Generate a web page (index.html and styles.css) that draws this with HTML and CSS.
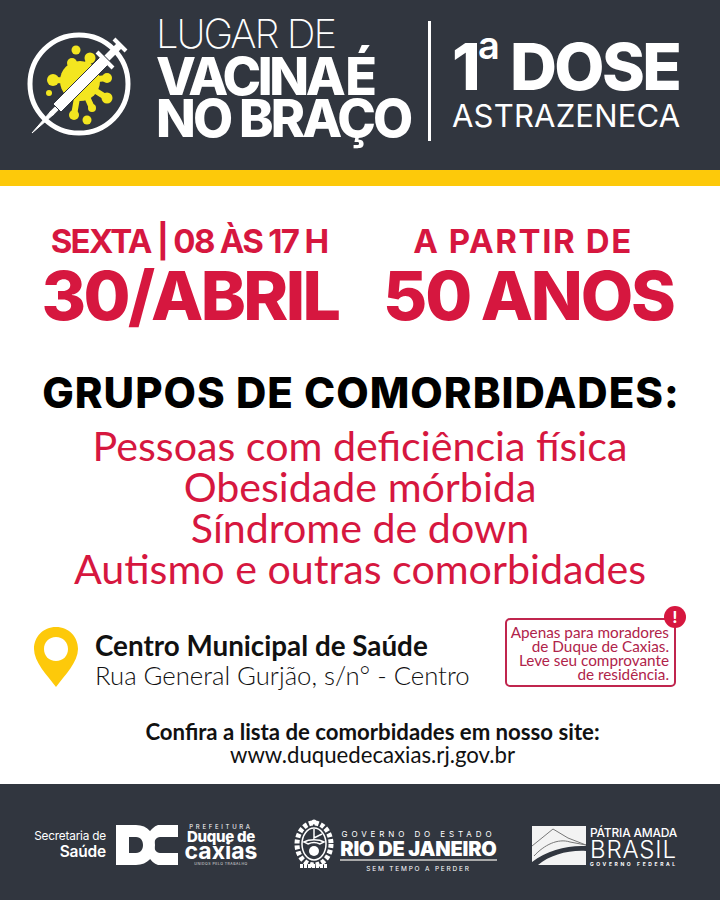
FILE: index.html
```html
<!DOCTYPE html>
<html lang="pt-BR">

<head>
    <meta charset="UTF-8">
    <title>Lugar de vacina é no braço</title>
    <link rel="stylesheet" href="styles.css">
</head>

<body>
    <header class="top">
        <svg class="vac-logo" width="106" height="106" viewBox="0 0 106 106">
            <circle cx="52" cy="57" r="49" fill="none" stroke="#fff" stroke-width="5" />
            <!-- virus -->
            <g fill="#f3e620">
                <circle cx="53" cy="54" r="20" />
                <circle cx="49" cy="23" r="4.5" />
                <circle cx="22" cy="66" r="3" />
                <circle cx="60" cy="93" r="4.5" />
                <circle cx="45" cy="36" r="5" />
                <circle cx="63" cy="31" r="5.5" />
                <circle cx="26" cy="53" r="6" />
                <circle cx="80" cy="51" r="5" />
                <circle cx="80" cy="71" r="5.5" />
                <circle cx="47" cy="88" r="5" />
                <circle cx="65" cy="81" r="4" />
                <path d="M45 36 53 54M63 31 53 54M26 53 53 54M80 51 53 54M80 71 53 54M47 88 53 54M65 81 53 54" stroke="#f3e620" stroke-width="6" />
            </g>
            <!-- seringa -->
            <path d="M5 106 24 84 27 87Z" fill="#fff" stroke="#fff" stroke-width="1" />
            <path d="M24 87 30 81" stroke="#fff" stroke-width="5" />
            <path d="M26 77 74 29 82 37 34 85Z" fill="#fff" stroke="#31363f" stroke-width="1" />
            <path d="M70 25 86 41" stroke="#fff" stroke-width="4" />
            <path d="M80 31 94 17" stroke="#fff" stroke-width="7" />
            <path d="M87 12 99 24" stroke="#fff" stroke-width="4" />
        </svg>
        <div class="slogan">
            <div class="slogan-thin">LUGAR DE</div>
            <div class="slogan-bold slogan-first">VACINA É</div>
            <div class="slogan-bold">NO BRAÇO</div>
        </div>
        <div class="top-divider"></div>
        <div class="dose">
            <div class="dose-num">1<sup>a</sup> DOSE</div>
            <div class="dose-name">ASTRAZENECA</div>
        </div>
    </header>
    <div class="stripe"></div>

    <main class="content">
        <div class="when">
            <div class="when-col">
                <div class="when-small">SEXTA | 08 ÀS 17 H</div>
                <div class="when-big">30/ABRIL</div>
            </div>
            <div class="when-col">
                <div class="when-small when-wide">A PARTIR DE</div>
                <div class="when-big">50 ANOS</div>
            </div>
        </div>

        <h1 class="groups-title">GRUPOS DE COMORBIDADES:</h1>
        <ul class="groups">
            <li>Pessoas com deficiência física</li>
            <li>Obesidade mórbida</li>
            <li>Síndrome de down</li>
            <li>Autismo e outras comorbidades</li>
        </ul>

        <div class="place-row">
            <svg class="pin" width="46" height="60" viewBox="0 0 46 60">
                <path d="M23 0C10 0 1 10 1 22c0 13 13 26 22 38 9-12 22-25 22-38C45 10 36 0 23 0Zm0 34c-7 0-12-5-12-12s5-12 12-12 12 5 12 12-5 12-12 12Z" fill="#fdc90a" fill-rule="evenodd" />
            </svg>
            <div class="place">
                <div class="place-name">Centro Municipal de Saúde</div>
                <div class="place-addr">Rua General Gurjão, s/n° - Centro</div>
            </div>
            <div class="notice">
                <span class="notice-mark">!</span>
                Apenas para moradores<br>
                de Duque de Caxias.<br>
                Leve seu comprovante<br>
                de residência.
            </div>
        </div>

        <div class="site">
            <div class="site-label">Confira a lista de comorbidades em nosso site:</div>
            <div>www.duquedecaxias.rj.gov.br</div>
        </div>
    </main>

    <footer class="bottom">
        <div class="sec">Secretaria de<br><b>Saúde</b></div>
        <svg class="dc-mark" width="62" height="40" viewBox="0 0 62 40">
            <path d="M0 0H20C32 0 39 9 39 20S32 40 20 40H0V0ZM13 12V28H20C25 28 27 24 27 20S25 12 20 12Z" fill="#fff" fill-rule="evenodd" />
            <path d="M62 0H42C34 3 30 11 30 20S34 37 42 40H62V28H44C40 28 38 24 38 20S40 12 44 12H62Z" fill="#fff" />
        </svg>
        <div class="dc-text">
            <div class="dc-pref">PREFEITURA</div>
            <div class="dc-duque">Duque de</div>
            <div class="dc-caxias">caxias</div>
            <div class="dc-unidos">UNIDOS PELO TRABALHO</div>
        </div>
        <svg class="rj-crest" width="42" height="52" viewBox="0 0 42 52">
            <ellipse cx="21" cy="25" rx="17" ry="21" fill="none" stroke="#fff" stroke-width="5" stroke-dasharray="4 2" />
            <ellipse cx="21" cy="25" rx="12" ry="16" fill="none" stroke="#fff" stroke-width="1.5" />
            <path d="M21 10V19L29 15M11 23C16 20 26 20 31 23L27 25C23 23 19 23 15 25Z" fill="none" stroke="#fff" stroke-width="1.5" />
            <circle cx="21" cy="32" r="5" fill="#fff" />
            <circle cx="21" cy="3" r="2.5" fill="#fff" />
            <path d="M7 47H35" stroke="#fff" stroke-width="4" stroke-dasharray="3 1" />
        </svg>
        <div class="rj-text">
            <div class="rj-gov">GOVERNO DO ESTADO</div>
            <div class="rj-name">RIO DE JANEIRO</div>
            <div class="rj-tag">SEM TEMPO A PERDER</div>
        </div>
        <svg class="br-mark" width="54" height="39" viewBox="0 0 54 39">
            <rect width="54" height="39" fill="#f3f3f3" />
            <path d="M0 36C15 24 36 19 54 20V25C36 24 18 29 6 39H0Z" fill="#31363f" />
            <path d="M0 20 21 3 36 12 54 19M2 30C12 19 26 12 38 16L54 19" fill="none" stroke="#777" stroke-width="1" />
        </svg>
        <div class="br-text">
            <div class="br-patria">PÁTRIA AMADA</div>
            <div class="br-name">BRASIL</div>
            <div class="br-gov">GOVERNO FEDERAL</div>
        </div>
    </footer>
</body>

</html>
```

FILE: styles.css
```css
* {
    box-sizing: border-box;
}

body {
    margin: 0;
    width: 720px;
    height: 900px;
    display: flex;
    flex-direction: column;
    background-color: #fff;
    font-family: 'Lato', 'Noto Sans', sans-serif;
    overflow: hidden;
}

/* topo */
.top {
    height: 170px;
    flex: none;
    display: flex;
    align-items: flex-start;
    background-color: #31363f;
    color: #fff;
    font-family: 'Inter', sans-serif;
}

.vac-logo {
    flex: none;
    margin: 27px 0 0 27px;
    overflow: visible;
}

.slogan {
    margin: 16px 0 0 23px;
    width: 263px;
    flex: none;
    white-space: nowrap;
}

.slogan-thin {
    font-size: 40px;
    line-height: 36px;
    font-weight: 200;
    letter-spacing: -2px;
}

.slogan-bold {
    font-size: 52px;
    line-height: 42px;
    font-weight: 800;
    letter-spacing: -2.8px;
}

.slogan-first {
    margin-top: 4px;
    word-spacing: -5px;
    letter-spacing: -3.4px;
}

.top-divider {
    width: 3px;
    height: 120px;
    margin: 21px 0 0 9px;
    background-color: #fff;
    flex: none;
}

.dose {
    margin: 34px 0 0 21px;
}

.dose-num {
    font-size: 65px;
    line-height: 66px;
    font-weight: 800;
    letter-spacing: -2.6px;
    word-spacing: -1px;
    white-space: nowrap;
}

.dose-num sup {
    font-size: 38px;
    font-weight: 600;
    line-height: 0;
    vertical-align: 31px;
    margin-right: 2px;
}

.dose-name {
    font-size: 31px;
    line-height: 32px;
    font-weight: 400;
    letter-spacing: .2px;
}

.stripe {
    height: 16px;
    flex: none;
    background-color: #fdc90a;
}

/* conteudo */
.content {
    flex: 1;
    padding-top: 36px;
}

.when {
    display: flex;
    font-family: 'Inter', sans-serif;
    color: #d6173f;
}

.when-col {
    text-align: center;
    white-space: nowrap;
}

.when-col:first-child {
    width: 300px;
    margin-left: 39px;
}

.when-col:last-child {
    width: 292px;
    margin-left: 38px;
}

.when-small {
    font-size: 33px;
    line-height: 38px;
    font-weight: 700;
    letter-spacing: -1.7px;
}

.when-wide {
    letter-spacing: 1.6px;
}

.when-big {
    font-size: 68px;
    line-height: 62px;
    font-weight: 800;
    letter-spacing: -2.6px;
    margin-top: 4px;
    padding-left: 2px;
}

.when-col:last-child .when-big {
    letter-spacing: -2.2px;
    word-spacing: -2px;
    padding-left: 6px;
}

.groups-title {
    margin: 45px 0 0;
    padding-left: 2px;
    text-align: center;
    font-family: 'Inter', sans-serif;
    font-size: 42px;
    line-height: 44px;
    font-weight: 800;
    letter-spacing: 1px;
    white-space: nowrap;
    color: #000;
}

.groups {
    margin: 10px 0 0;
    padding: 0;
    list-style: none;
    text-align: center;
    color: #d6173f;
    font-size: 41.2px;
    line-height: 41px;
}

.place-row {
    display: flex;
    align-items: flex-start;
    margin-top: 19px;
}

.pin {
    flex: none;
    margin: 19px 0 0 33px;
}

.place {
    margin: 22px 0 0 16px;
    width: 410px;
    flex: none;
    color: #111;
}

.place-name {
    font-size: 27.8px;
    line-height: 31px;
    font-weight: 700;
}

.place-addr {
    font-size: 25.7px;
    line-height: 29px;
    font-weight: 300;
}

.notice {
    position: relative;
    width: 171px;
    height: 69px;
    margin-top: 10px;
    padding: 5px 5px 0 0;
    border: 2px solid #c0254d;
    border-radius: 5px;
    text-align: right;
    font-size: 15.3px;
    line-height: 14px;
    color: #b0234a;
    white-space: nowrap;
}

.notice-mark {
    position: absolute;
    top: -14px;
    right: -12px;
    width: 22px;
    height: 22px;
    border-radius: 50%;
    background-color: #d6173f;
    color: #fff;
    font-size: 17px;
    font-weight: 900;
    line-height: 22px;
    text-align: center;
}

.site {
    margin-top: 30px;
    padding-left: 25px;
    text-align: center;
    font-size: 22.2px;
    line-height: 23px;
    color: #111;
}

.site-label {
    font-weight: 700;
}

/* rodape */
.bottom {
    height: 116px;
    flex: none;
    display: flex;
    align-items: center;
    background-color: #31363f;
    color: #fff;
    font-family: 'Inter', sans-serif;
    padding: 6px 0 0 34px;
}

.sec {
    width: 72px;
    text-align: right;
    font-size: 11.8px;
    line-height: 15px;
    letter-spacing: -.2px;
    flex: none;
}

.sec b {
    font-size: 15.5px;
    font-weight: 600;
}

.dc-mark {
    margin-left: 10px;
    flex: none;
}

.dc-text {
    margin-left: 5px;
    width: 76px;
    flex: none;
    text-align: center;
    line-height: 1;
    white-space: nowrap;
}

.dc-pref {
    font-size: 6px;
    letter-spacing: 2.7px;
}

.dc-duque {
    font-size: 15px;
    font-weight: 800;
    letter-spacing: -.3px;
    line-height: 12px;
    margin-top: 1px;
}

.dc-caxias {
    font-size: 23px;
    font-weight: 700;
    line-height: 17px;
}

.dc-unidos {
    font-size: 3.5px;
    margin-top: 3px;
    letter-spacing: .5px;
    opacity: .8;
}

.rj-crest {
    margin-left: 34px;
    flex: none;
}

.rj-text {
    margin: 12px 0 0 5px;
    width: 157px;
    flex: none;
    text-align: center;
    white-space: nowrap;
}

.rj-gov {
    font-size: 8px;
    line-height: 10px;
    letter-spacing: 3.9px;
}

.rj-name {
    font-size: 20px;
    line-height: 20px;
    font-weight: 900;
    letter-spacing: -.2px;
    border-bottom: 2px solid #aaa;
}

.rj-tag {
    margin-top: 4px;
    font-size: 6.5px;
    line-height: 8px;
    letter-spacing: 1.8px;
}

.br-mark {
    margin: 1px 0 0 35px;
    flex: none;
}

.br-text {
    margin: 4px 0 0 4px;
    white-space: nowrap;
}

.br-patria {
    font-size: 12px;
    line-height: 12px;
    font-weight: 500;
    letter-spacing: -.2px;
}

.br-name {
    font-size: 24px;
    line-height: 21px;
    font-weight: 300;
    letter-spacing: .8px;
}

.br-gov {
    font-size: 5px;
    line-height: 8px;
    font-weight: 700;
    letter-spacing: 2.6px;
}
```
